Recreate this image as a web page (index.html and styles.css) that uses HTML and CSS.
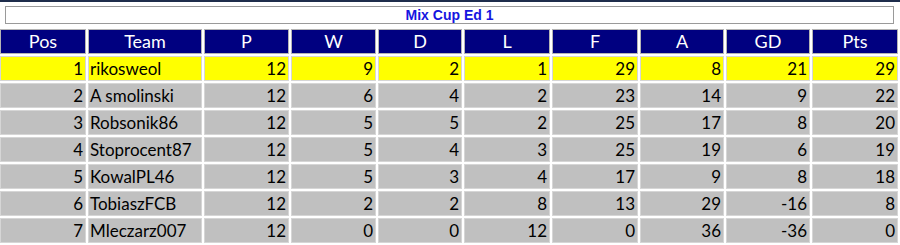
FILE: index.html
```html
<!DOCTYPE html>
<html>
<head>
<meta charset="utf-8">
<link rel="stylesheet" href="styles.css">
</head>
<body>
<div class="page">
  <div class="title">Mix Cup Ed 1</div>
  <div class="table">
    <div class="row head">
      <div class="c">Pos</div><div class="c">Team</div><div class="c">P</div><div class="c">W</div><div class="c">D</div><div class="c">L</div><div class="c">F</div><div class="c">A</div><div class="c">GD</div><div class="c">Pts</div>
    </div>
    <div class="row first">
      <div class="c">1</div><div class="c team">rikosweol</div><div class="c">12</div><div class="c">9</div><div class="c">2</div><div class="c">1</div><div class="c">29</div><div class="c">8</div><div class="c">21</div><div class="c">29</div>
    </div>
    <div class="row">
      <div class="c">2</div><div class="c team">A smolinski</div><div class="c">12</div><div class="c">6</div><div class="c">4</div><div class="c">2</div><div class="c">23</div><div class="c">14</div><div class="c">9</div><div class="c">22</div>
    </div>
    <div class="row">
      <div class="c">3</div><div class="c team">Robsonik86</div><div class="c">12</div><div class="c">5</div><div class="c">5</div><div class="c">2</div><div class="c">25</div><div class="c">17</div><div class="c">8</div><div class="c">20</div>
    </div>
    <div class="row">
      <div class="c">4</div><div class="c team">Stoprocent87</div><div class="c">12</div><div class="c">5</div><div class="c">4</div><div class="c">3</div><div class="c">25</div><div class="c">19</div><div class="c">6</div><div class="c">19</div>
    </div>
    <div class="row">
      <div class="c">5</div><div class="c team">KowalPL46</div><div class="c">12</div><div class="c">5</div><div class="c">3</div><div class="c">4</div><div class="c">17</div><div class="c">9</div><div class="c">8</div><div class="c">18</div>
    </div>
    <div class="row">
      <div class="c">6</div><div class="c team">TobiaszFCB</div><div class="c">12</div><div class="c">2</div><div class="c">2</div><div class="c">8</div><div class="c">13</div><div class="c">29</div><div class="c">-16</div><div class="c">8</div>
    </div>
    <div class="row">
      <div class="c">7</div><div class="c team">Mleczarz007</div><div class="c">12</div><div class="c">0</div><div class="c">0</div><div class="c">12</div><div class="c">0</div><div class="c">36</div><div class="c">-36</div><div class="c">0</div>
    </div>
  </div>
</div>
</body>
</html>
```
FILE: styles.css
```css
html, body {
  margin: 0;
  padding: 0;
  background: #ffffff;
}
.page {
  width: 900px;
  border-top: 2px solid #1e2d4c;
  box-sizing: border-box;
}
.title {
  margin: 4px 6px 0 5px;
  height: 18px;
  box-sizing: border-box;
  border: 1px solid #9a9a9a;
  font-family: "Liberation Sans", Arial, sans-serif;
  font-weight: bold;
  font-size: 14px;
  line-height: 16px;
  color: #1515e0;
  text-align: center;
}
.table {
  margin-top: 5px;
  display: flex;
  flex-direction: column;
  gap: 2px;
}
.row {
  display: grid;
  grid-template-columns: 86px 114px 85px 85px 84px 86px 86px 84px 84px 86px;
  column-gap: 2px;
  height: 25px;
}
.c {
  box-sizing: border-box;
  border: 1px solid #d6d6d6;
  background: #c0c0c0;
  font-family: Lato, "Open Sans", sans-serif;
  font-size: 17px;
  line-height: 23px;
  color: #000;
  text-align: right;
  padding: 0 2px 0 2px;
  white-space: nowrap;
  overflow: hidden;
}
.c.team {
  text-align: left;
  padding-left: 1px;
}
.head .c {
  background: #000080;
  color: #ffffff;
  text-align: center;
  font-size: 18px;
  border-color: #b4b4b4;
}
.first .c {
  background: #ffff00;
}
```
